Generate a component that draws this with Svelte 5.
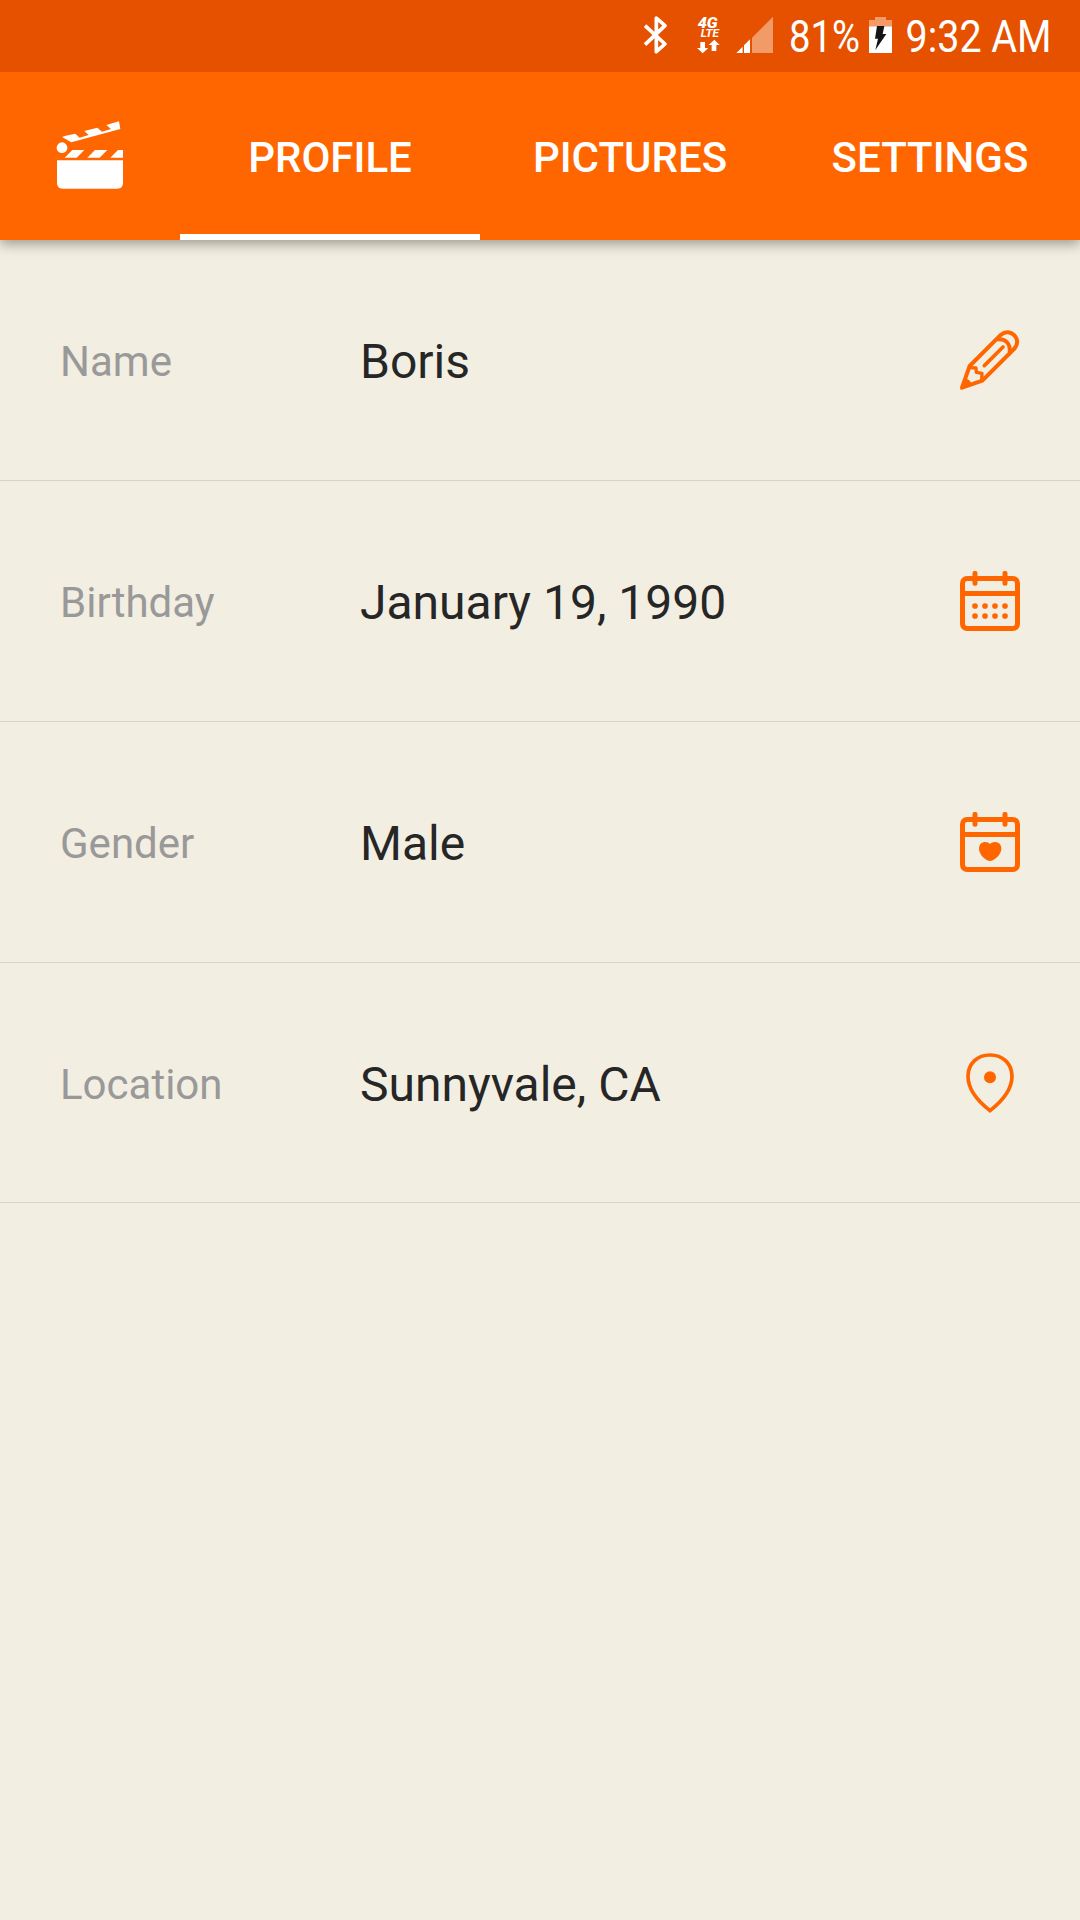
<script>
  const tabs = ['PROFILE', 'PICTURES', 'SETTINGS'];
  let active = $state('PROFILE');
  const rows = [
    { label: 'Name', value: 'Boris', icon: 'pencil' },
    { label: 'Birthday', value: 'January 19, 1990', icon: 'calendar' },
    { label: 'Gender', value: 'Male', icon: 'heart' },
    { label: 'Location', value: 'Sunnyvale, CA', icon: 'pin' },
  ];
</script>

<div class="screen">
  <div class="status">
    <svg class="bluetooth" viewBox="72 0 72 216" fill="none" stroke="#fff" stroke-width="11" stroke-linejoin="round">
      <path d="M75 77L135 132L109 155V54L135 77L75 134" />
    </svg>
    <svg class="lte" viewBox="231 0 72 216" fill="#fff">
      <text class="net" x="233" y="83" font-size="41" textLength="60" lengthAdjust="spacingAndGlyphs">4G</text>
      <text class="net lighter" x="242" y="110" font-size="30" textLength="55" lengthAdjust="spacingAndGlyphs">LTE</text>
      <path d="M241 126h14v18h10l-17 16l-17-16h10zM275 153h14v-18h10l-16-16l-17 16h9z" />
    </svg>
    <svg class="signal" viewBox="348 0 114 216">
      <path d="M396 159V113L459 50V159z" fill="#f29a68" />
      <path d="M349 159L368 140V159zM372 159V136L390 118V159z" fill="#fff" />
    </svg>
    <svg class="percent" viewBox="0 0 72 72" fill="#fff">
      <text x="1" y="52" font-size="44.5" textLength="71" lengthAdjust="spacingAndGlyphs">81%</text>
    </svg>
    <svg class="battery" viewBox="267 0 69 216">
      <path d="M267 60h18v-9h33v9h18v19h-69z" fill="#f29a68" />
      <path d="M267 79h69v80h-69z" fill="#fff" />
      <path d="M291 78h22l-5 24h11l-33 48l8-34h-9z" fill="#151515" />
    </svg>
    <svg class="time" viewBox="0 0 146 72" fill="#fff">
      <text x="0.5" y="52" font-size="44.5" textLength="146" lengthAdjust="spacingAndGlyphs">9:32 AM</text>
    </svg>
  </div>

  <header>
    <div class="logo">
      <svg viewBox="0 -12 360 360" fill="#fff">
        <circle cx="96" cy="143" r="16" />
        <path d="M96 111L107 107L136 101L149 113L176 105L163 93L202 83L216 95L243 87L229 75L267 64L271 87L124 127z" />
        <path d="M104 173L127 150H163L140 173zM172 173L195 150H232L209 173zM241 173L264 150H279V173z" />
        <path d="M81 181H279V249Q279 266 262 266H98Q81 266 81 249z" />
      </svg>
    </div>
    <nav>
      {#each tabs as tab}
        <button class:active={tab === active} onclick={() => (active = tab)}>{tab}</button>
      {/each}
    </nav>
  </header>

  <main>
    {#each rows as row}
      <div class="row">
        <span class="label">{row.label}</span>
        <span class="value">{row.value}</span>
        {#if row.icon === 'pencil'}
          <svg class="icon" viewBox="60 60 180 180" fill="none" stroke="#f60" stroke-width="12" stroke-linejoin="round" stroke-linecap="round">
            <path d="M89 168L183 74C197 62 213 66 222 75C233 85 236 103 222 117L127 212L66 233z" />
            <path d="M174 88C196 85 212 102 209 125" />
            <path stroke-width="11" d="M133 167L189 111" />
            <path stroke-width="10" d="M90 173L108 174L109 187L126 190L125 208" />
            <path fill="#f60" stroke="none" d="M74 206C84 205 94 213 95 226L61 239z" />
          </svg>
        {:else if row.icon === 'pin'}
          <svg class="icon" viewBox="60 69 180 180">
            <path fill="none" stroke="#f60" stroke-width="11" d="M150 242C119 218 84 185 84 139C84 101 112 75 150 75C188 75 216 101 216 139C216 185 181 218 150 242z" />
            <circle cx="150" cy="142" r="18" fill="#f60" />
          </svg>
        {:else}
          <svg class="icon" viewBox="60 63 180 180" fill="none" stroke="#f60" stroke-width="15">
            <rect x="67.500" y="85.500" width="165" height="150" rx="14" />
            <path d="M67 130.500H233" />
            <path stroke-linecap="round" d="M105 70V100M195 70V100" />
            {#if row.icon === 'calendar'}
              {#each [168, 198] as cy}
                {#each [105, 135, 165, 195] as cx}
                  <circle {cx} {cy} r="8.500" fill="#f60" stroke="none" />
                {/each}
              {/each}
            {:else}
              <path fill="#f60" stroke="none" d="M150 159C142 149 117 150 117 173C117 192 139 210 150 210C161 210 184 192 184 173C184 150 158 149 150 159z" />
            {/if}
          </svg>
        {/if}
      </div>
    {/each}
  </main>
</div>

<style>
  :global(body) {
    margin: 0;
    background: #f2eee1;
  }
  .screen {
    width: 1080px;
    height: 1920px;
    overflow: hidden;
    background: #f2eee1;
    font-family: Roboto, 'Liberation Sans', sans-serif;
  }
  .status {
    display: flex;
    justify-content: flex-end;
    height: 72px;
    padding-right: 29px;
    background: #e65100;
  }
  svg {
    display: block;
    flex: none;
  }
  .status svg {
    height: 72px;
    overflow: visible;
  }
  .bluetooth { width: 24px; margin-right: 29px; }
  .lte { width: 24px; margin-right: 15px; }
  .signal { width: 38px; margin-right: 14px; }
  .percent { width: 72px; margin-right: 9px; }
  .battery { width: 23px; margin-right: 13px; }
  .time { width: 146px; }
  .net {
    font-weight: 900;
    font-style: italic;
  }
  .net.lighter {
    font-weight: 700;
  }
  header {
    position: relative;
    display: flex;
    height: 168px;
    background: #f60;
    box-shadow: 0 4px 12px rgba(0, 0, 0, 0.36);
    /* keep the shadow off the status bar */
    clip-path: inset(0 0 -24px 0);
  }
  .logo {
    display: flex;
    align-items: center;
    justify-content: center;
    width: 180px;
  }
  .logo svg {
    width: 120px;
    height: 120px;
  }
  nav {
    display: grid;
    flex: 1;
    grid-template-columns: repeat(3, 1fr);
  }
  button {
    box-sizing: border-box;
    margin: 0;
    padding: 9px 0 0;
    border: 0;
    border-bottom: 6px solid transparent;
    background: none;
    color: #fff;
    font: 500 42px/1 Roboto, 'Liberation Sans', sans-serif;
  }
  button.active {
    border-bottom-color: #fff;
  }
  .row {
    display: flex;
    align-items: center;
    height: 240px;
    padding: 0 60px;
    border-bottom: 1px solid #d6d3c9;
  }
  .row:last-child {
    height: 238px;
    padding-top: 1px;
  }
  .label {
    width: 300px;
    padding-top: 2px;
    color: #999;
    font-size: 42px;
  }
  .value {
    flex: 1;
    padding-top: 2px;
    color: #262626;
    font-size: 48px;
  }
  .icon {
    width: 60px;
    height: 60px;
  }
</style>
